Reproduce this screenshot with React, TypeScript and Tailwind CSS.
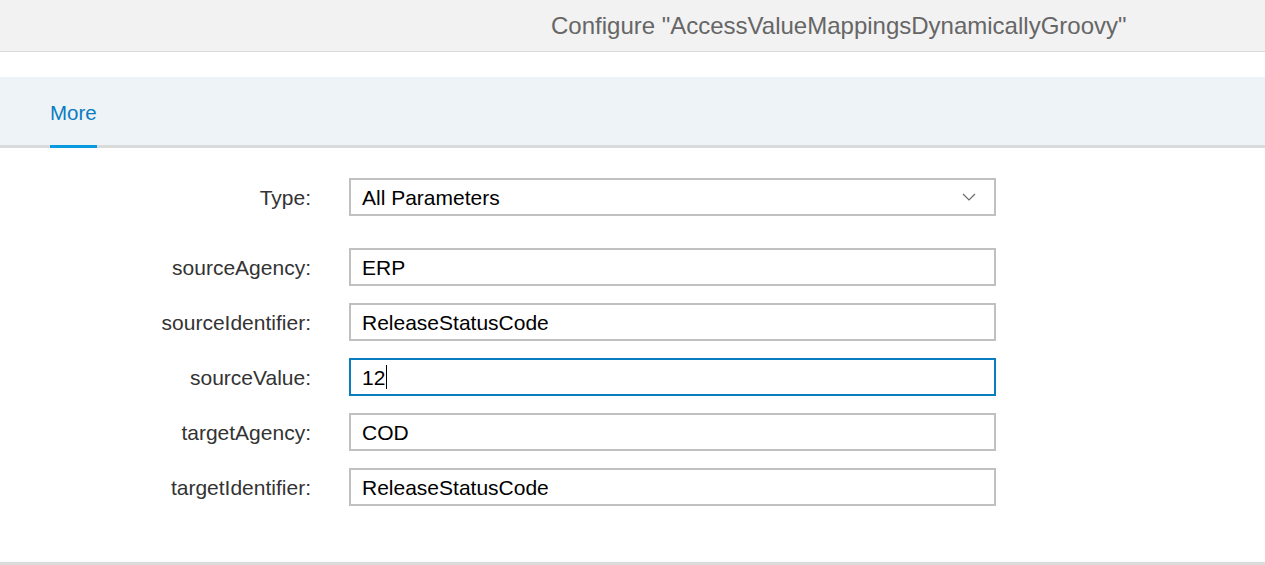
import React from "react";

const rows: { label: string; value: string; focused?: boolean }[] = [
  { label: "sourceAgency:", value: "ERP" },
  { label: "sourceIdentifier:", value: "ReleaseStatusCode" },
  { label: "sourceValue:", value: "12", focused: true },
  { label: "targetAgency:", value: "COD" },
  { label: "targetIdentifier:", value: "ReleaseStatusCode" },
];

function Row({ label, children }: { label: string; children: React.ReactNode }) {
  return (
    <div className="flex items-center">
      <div className="w-[311px] text-right text-[21px] text-[#333333] shrink-0 leading-none">{label}</div>
      <div className="ml-[38px] w-[647px] shrink-0">{children}</div>
    </div>
  );
}

export default function App() {
  return (
    <div
      className="w-[1265px] h-[565px] overflow-hidden bg-white flex flex-col"
      style={{ fontFamily: '"Liberation Sans", Arial, sans-serif' }}
    >
      <div className="h-[52px] shrink-0 bg-[#f2f2f2] border-b border-[#dcdcdc] flex items-center pl-[551px]">
        <span className="text-[24px] text-[#666666] leading-none whitespace-nowrap">
          Configure "AccessValueMappingsDynamicallyGroovy"
        </span>
      </div>
      <div className="h-[25px] shrink-0" />
      <div className="h-[71px] shrink-0 bg-[#eef3f8] border-b-[3px] border-[#dadada] flex items-end pl-[50px]">
        <div className="relative h-full flex items-center">
          <span className="text-[20.5px] text-[#0a7cc0] leading-none pt-[4px]">More</span>
          <div className="absolute left-0 right-0 bottom-[-3px] h-[3px] bg-[#0a9ade]" />
        </div>
      </div>
      <div className="flex flex-col pt-[30px]">
        <Row label="Type:">
          <div className="h-[38px] border-2 border-[#c0c0c0] bg-white flex items-center justify-between pl-[11px] pr-[18px]">
            <span className="text-[21px] text-[#000000] leading-none">All Parameters</span>
            <svg width="14" height="8" viewBox="0 0 14 8" fill="none">
              <path d="M1 1 L7 7 L13 1" stroke="#6a6a6a" strokeWidth="1.2" />
            </svg>
          </div>
        </Row>
        <div className="h-[32px]" />
        <div className="flex flex-col gap-[17px]">
          {rows.map((r) => (
            <Row key={r.label} label={r.label}>
              <div
                className={
                  "h-[38px] border-2 bg-white flex items-center pl-[11px] " +
                  (r.focused ? "border-[#0a7cc0]" : "border-[#c0c0c0]")
                }
              >
                <span className="text-[21px] text-[#000000] leading-none">{r.value}</span>
                {r.focused && <span className="w-px h-[24px] bg-black ml-[1px]" />}
              </div>
            </Row>
          ))}
        </div>
      </div>
      <div className="flex-1" />
      <div className="h-[3px] shrink-0 bg-[#dcdcdc]" />
    </div>
  );
}
